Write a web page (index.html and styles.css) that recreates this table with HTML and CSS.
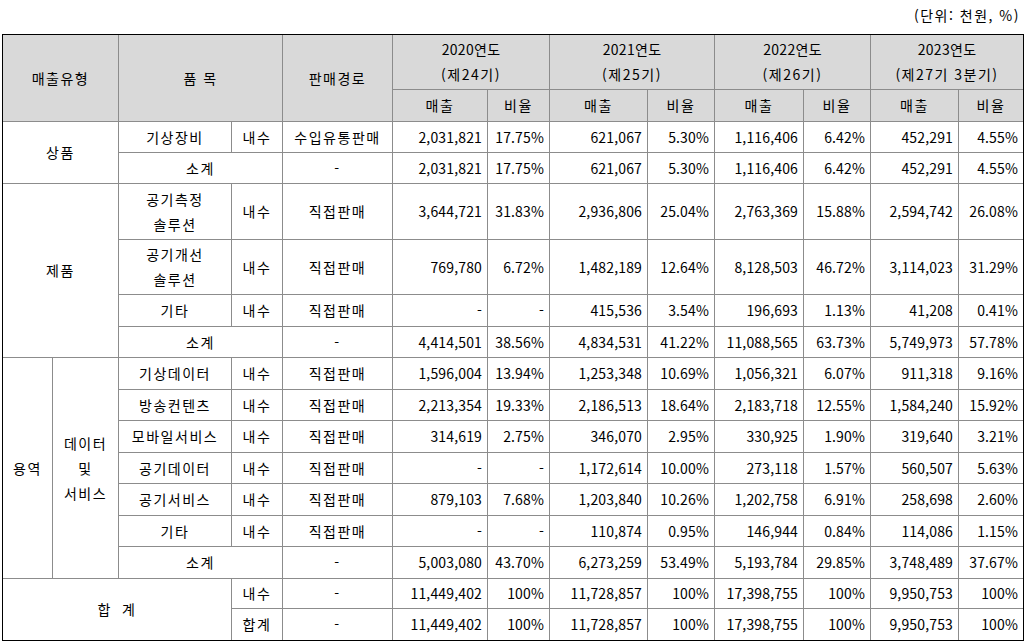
FILE: index.html
```html
<!DOCTYPE html>
<html lang="ko">
<head>
<meta charset="utf-8">
<title>매출유형별 실적</title>
<link rel="stylesheet" href="styles.css">
</head>
<body>
<div class="page">
  <div class="unit">(단위: 천원, %)</div>
  <div class="sheet">
    <div class="hd c2 r2">매출유형</div>
    <div class="hd c2 r2">품 목</div>
    <div class="hd r2">판매경로</div>
    <div class="hd c2"><span><span class="yr">2020연도</span><br>(제24기)</span></div>
    <div class="hd c2"><span><span class="yr">2021연도</span><br>(제25기)</span></div>
    <div class="hd c2"><span><span class="yr">2022연도</span><br>(제26기)</span></div>
    <div class="hd c2"><span><span class="yr">2023연도</span><br>(제27기 3분기)</span></div>
    <div class="hd">매출</div><div class="hd">비율</div>
    <div class="hd">매출</div><div class="hd">비율</div>
    <div class="hd">매출</div><div class="hd">비율</div>
    <div class="hd">매출</div><div class="hd">비율</div>

    <div class="c2 r2">상품</div>
    <div>기상장비</div><div>내수</div><div>수입유통판매</div>
    <div class="num">2,031,821</div><div class="num">17.75%</div>
    <div class="num">621,067</div><div class="num">5.30%</div>
    <div class="num">1,116,406</div><div class="num">6.42%</div>
    <div class="num">452,291</div><div class="num">4.55%</div>

    <div class="c2">소계</div><div>-</div>
    <div class="num">2,031,821</div><div class="num">17.75%</div>
    <div class="num">621,067</div><div class="num">5.30%</div>
    <div class="num">1,116,406</div><div class="num">6.42%</div>
    <div class="num">452,291</div><div class="num">4.55%</div>

    <div class="c2 r4">제품</div>
    <div>공기측정<br>솔루션</div><div>내수</div><div>직접판매</div>
    <div class="num">3,644,721</div><div class="num">31.83%</div>
    <div class="num">2,936,806</div><div class="num">25.04%</div>
    <div class="num">2,763,369</div><div class="num">15.88%</div>
    <div class="num">2,594,742</div><div class="num">26.08%</div>

    <div>공기개선<br>솔루션</div><div>내수</div><div>직접판매</div>
    <div class="num">769,780</div><div class="num">6.72%</div>
    <div class="num">1,482,189</div><div class="num">12.64%</div>
    <div class="num">8,128,503</div><div class="num">46.72%</div>
    <div class="num">3,114,023</div><div class="num">31.29%</div>

    <div>기타</div><div>내수</div><div>직접판매</div>
    <div class="num">-</div><div class="num">-</div>
    <div class="num">415,536</div><div class="num">3.54%</div>
    <div class="num">196,693</div><div class="num">1.13%</div>
    <div class="num">41,208</div><div class="num">0.41%</div>

    <div class="c2">소계</div><div>-</div>
    <div class="num">4,414,501</div><div class="num">38.56%</div>
    <div class="num">4,834,531</div><div class="num">41.22%</div>
    <div class="num">11,088,565</div><div class="num">63.73%</div>
    <div class="num">5,749,973</div><div class="num">57.78%</div>

    <div class="r7">용역</div>
    <div class="r7">데이터<br>및<br>서비스</div>
    <div>기상데이터</div><div>내수</div><div>직접판매</div>
    <div class="num">1,596,004</div><div class="num">13.94%</div>
    <div class="num">1,253,348</div><div class="num">10.69%</div>
    <div class="num">1,056,321</div><div class="num">6.07%</div>
    <div class="num">911,318</div><div class="num">9.16%</div>

    <div>방송컨텐츠</div><div>내수</div><div>직접판매</div>
    <div class="num">2,213,354</div><div class="num">19.33%</div>
    <div class="num">2,186,513</div><div class="num">18.64%</div>
    <div class="num">2,183,718</div><div class="num">12.55%</div>
    <div class="num">1,584,240</div><div class="num">15.92%</div>

    <div>모바일서비스</div><div>내수</div><div>직접판매</div>
    <div class="num">314,619</div><div class="num">2.75%</div>
    <div class="num">346,070</div><div class="num">2.95%</div>
    <div class="num">330,925</div><div class="num">1.90%</div>
    <div class="num">319,640</div><div class="num">3.21%</div>

    <div>공기데이터</div><div>내수</div><div>직접판매</div>
    <div class="num">-</div><div class="num">-</div>
    <div class="num">1,172,614</div><div class="num">10.00%</div>
    <div class="num">273,118</div><div class="num">1.57%</div>
    <div class="num">560,507</div><div class="num">5.63%</div>

    <div>공기서비스</div><div>내수</div><div>직접판매</div>
    <div class="num">879,103</div><div class="num">7.68%</div>
    <div class="num">1,203,840</div><div class="num">10.26%</div>
    <div class="num">1,202,758</div><div class="num">6.91%</div>
    <div class="num">258,698</div><div class="num">2.60%</div>

    <div>기타</div><div>내수</div><div>직접판매</div>
    <div class="num">-</div><div class="num">-</div>
    <div class="num">110,874</div><div class="num">0.95%</div>
    <div class="num">146,944</div><div class="num">0.84%</div>
    <div class="num">114,086</div><div class="num">1.15%</div>

    <div class="c2">소계</div><div>-</div>
    <div class="num">5,003,080</div><div class="num">43.70%</div>
    <div class="num">6,273,259</div><div class="num">53.49%</div>
    <div class="num">5,193,784</div><div class="num">29.85%</div>
    <div class="num">3,748,489</div><div class="num">37.67%</div>

    <div class="c3 r2"><span>합<span class="gap"></span>계</span></div>
    <div>내수</div><div>-</div>
    <div class="num">11,449,402</div><div class="num">100%</div>
    <div class="num">11,728,857</div><div class="num">100%</div>
    <div class="num">17,398,755</div><div class="num">100%</div>
    <div class="num">9,950,753</div><div class="num">100%</div>

    <div>합계</div><div>-</div>
    <div class="num">11,449,402</div><div class="num">100%</div>
    <div class="num">11,728,857</div><div class="num">100%</div>
    <div class="num">17,398,755</div><div class="num">100%</div>
    <div class="num">9,950,753</div><div class="num">100%</div>
  </div>
</div>
</body>
</html>
```

FILE: styles.css
```css
html, body {
  margin: 0;
  padding: 0;
  background: #ffffff;
}

body {
  font-family: "Noto Sans CJK KR", "Noto Sans", sans-serif;
  font-size: 14px;
  letter-spacing: 1.5px;
  color: #000000;
}

.page {
  width: 1022px;
  padding-left: 2px;
}

.unit {
  height: 34px;
  box-sizing: border-box;
  padding-top: 6px;
  padding-right: 4px;
  line-height: 18px;
  text-align: right;
}

.sheet {
  width: 1020px;
  border: 1px solid #000000;
  display: grid;
  grid-template-columns: 49px 65px 112px 50px 109px 94px 61px 97px 66px 88px 66px 87px 64px;
  grid-template-rows: 54px 31px 30px 30px 55px 54px 31px 30px 31px 30px 31px 30px 31px 30px 31px 29px 31px;
  gap: 1px;
  background: #8c8c8c;
}

.sheet > div {
  background: #ffffff;
  display: flex;
  align-items: center;
  justify-content: center;
  text-align: center;
  line-height: 25px;
  white-space: nowrap;
}

.sheet > .hd {
  background: #d9d9d9;
}

.sheet > .num {
  justify-content: flex-end;
  padding-right: 5px;
  letter-spacing: 0.15px;
}

.yr {
  letter-spacing: 0.3px;
}

.c2 { grid-column: span 2; }
.c3 { grid-column: span 3; }
.r2 { grid-row: span 2; }
.r4 { grid-row: span 4; }
.r7 { grid-row: span 7; }

.gap {
  display: inline-block;
  width: 10px;
}
```
